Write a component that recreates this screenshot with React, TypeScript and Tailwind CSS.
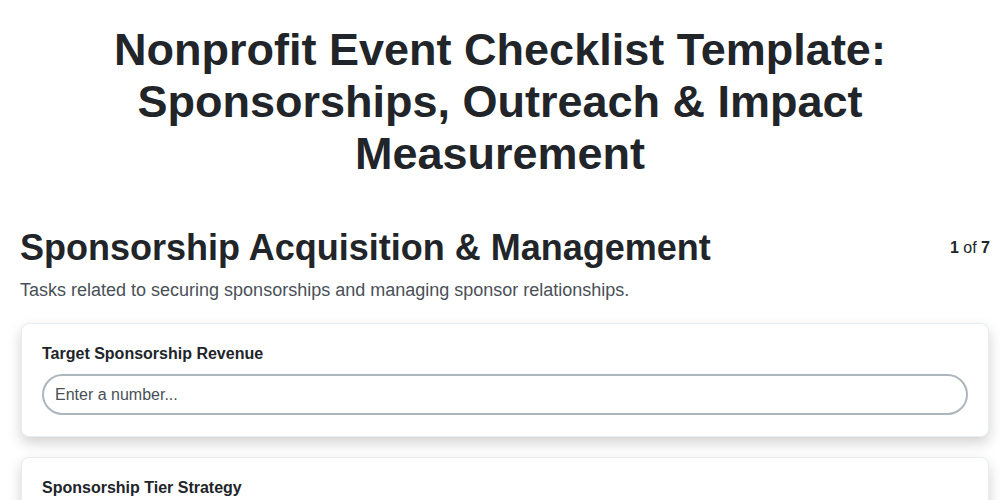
export default function App() {
  return (
    <div className="min-h-screen bg-white text-[#212529]" style={{ fontFamily: '"Liberation Sans", Arial, sans-serif' }}>
      <h1 className="px-5 pt-[24px] text-center text-[45px] font-bold leading-[52px] text-[#212529]">
        Nonprofit Event Checklist Template:
        <br />
        Sponsorships, Outreach &amp; Impact
        <br />
        Measurement
      </h1>

      <div className="pl-5 pr-[11px]">
        <div className="mt-[46px] flex items-start justify-between">
          <h2 className="text-[36px] font-bold leading-[44px]">Sponsorship Acquisition &amp; Management</h2>
          <div className="-mr-px pt-[10px] text-base">
            <span className="font-bold">1</span> of <span className="font-bold">7</span>
          </div>
        </div>
        <p className="mt-[8px] text-[18px] leading-6 text-[#495057]">
          Tasks related to securing sponsorships and managing sponsor relationships.
        </p>

        <div className="ml-px mt-[21px] flex flex-col gap-[20px]">
          <div className="rounded-lg border border-[#e9ecef] bg-white px-5 pb-[21px] pt-[20px] shadow-[0_6px_14px_rgba(0,0,0,0.18)]">
            <label className="block text-base font-bold leading-5">Target Sponsorship Revenue</label>
            <input
              type="text"
              placeholder="Enter a number..."
              className="mt-[10px] h-[41px] w-full rounded-full border-2 border-[#adb5bd] bg-white px-[11px] text-base text-[#212529] outline-none placeholder:text-[#495057]"
            />
          </div>
          <div className="rounded-lg border border-[#e9ecef] bg-white px-5 pb-[21px] pt-[20px] shadow-[0_6px_14px_rgba(0,0,0,0.18)]">
            <label className="block text-base font-bold leading-5">Sponsorship Tier Strategy</label>
            <textarea className="mt-[10px] h-[80px] w-full rounded-2xl border-2 border-[#adb5bd] bg-white px-[11px] py-2 text-base outline-none" />
          </div>
        </div>
      </div>
    </div>
  )
}
